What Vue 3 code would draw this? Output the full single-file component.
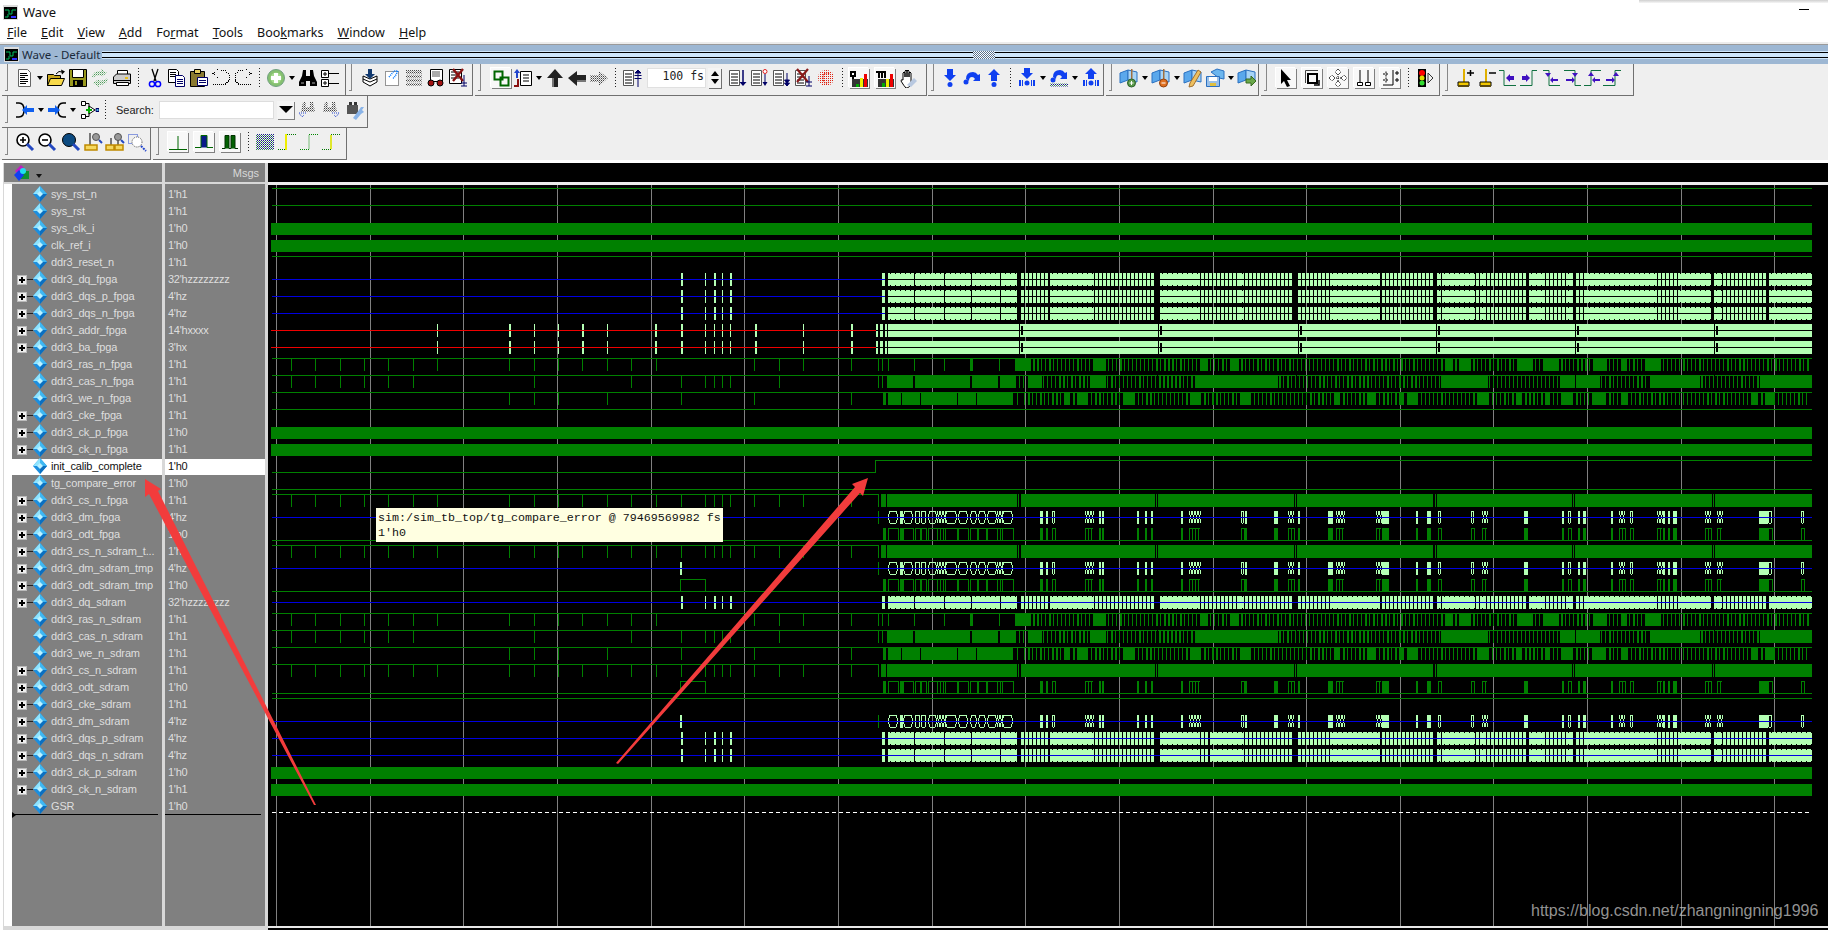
<template>
  <div class="app">
    <svg class="defs" width="0" height="0">
      <defs>
        <pattern id="dgreen" width="2" height="2" patternUnits="userSpaceOnUse"><rect width="1" height="1" fill="#4a9a5a" /><rect x="1" y="1" width="1" height="1" fill="#a8d0a8" /></pattern>
        <pattern id="dgray" width="2" height="2" patternUnits="userSpaceOnUse"><rect width="1" height="1" fill="#444" /><rect x="1" y="1" width="1" height="1" fill="#999" /></pattern>
        <pattern id="dblue" width="2" height="2" patternUnits="userSpaceOnUse"><rect width="1" height="1" fill="#1a1a8a" /><rect x="1" y="1" width="1" height="1" fill="#3a8a5a" /></pattern>
        <pattern id="dred" width="2" height="2" patternUnits="userSpaceOnUse"><rect width="1" height="1" fill="#e02010" /></pattern>
      </defs>
    </svg>

    <div class="titlebar">
      <svg class="appicon" viewBox="0 0 15 15" v-html="appIcon"></svg>
      <span class="title">Wave</span>
      <span class="minimize"></span>
    </div>
    <div class="menubar">
      <span v-for="m in menu" :key="m[0] + m[1]" class="menu-item">{{ m[0] }}<u>{{ m[1] }}</u>{{ m[2] }}</span>
    </div>

    <div class="subtitle">
      <svg class="subicon" viewBox="0 0 15 15" v-html="appIcon"></svg>
      <span class="subtitle-text">Wave - Default</span>
      <span class="stripes first"></span>
      <span class="grip-dots"></span>
      <span class="stripes"></span>
    </div>

    <div v-for="(row, r) in toolRows" :key="r" class="toolrow">
      <div v-for="(bar, b) in row" :key="b" class="toolbar" :style="{ width: bar.w + 'px', marginLeft: bar.m + 'px' }">
        <span class="grip"></span>
        <template v-for="(it, n) in bar.items" :key="n">
          <span v-if="it === '|'" class="sep"></span>
          <span v-else-if="it === 'v'" class="drop"></span>
          <span v-else-if="it[0] === '_'" :style="{ width: it.slice(1) + 'px' }"></span>
          <span v-else-if="it === 'search'" class="search">
            <span class="search-label">Search:</span>
            <span class="search-input"></span>
            <span class="search-drop"><i></i></span>
          </span>
          <span v-else-if="it === 'time'" class="time">
            <span class="time-input">100 fs</span>
            <span class="spin"><i class="up"></i><i class="down"></i></span>
          </span>
          <span v-else class="cell" :class="{ raised: raised.includes(it), narrow: narrow.includes(it) }">
            <svg viewBox="0 0 20 20" width="20" height="20" v-html="icons[it]"></svg>
          </span>
        </template>
      </div>
    </div>

    <div class="main">
      <div class="side">
        <div class="col names">
          <div class="col-head">
            <svg class="head-icon" viewBox="0 0 18 18">
              <path d="M2 7l6-6 5 5-6 6z" fill="#c020c0" />
              <path d="M8 7h8v8H8z" fill="#109030" />
              <path d="M1 11l5-5 5 5-5 6z" fill="#1040f0" />
              <circle cx="10" cy="7" r="3" fill="#20e0f0" />
            </svg>
            <span class="head-arrow"></span>
          </div>
          <div class="col-body">
            <div v-for="s in signals" :key="s.name" class="row" :class="{ sel: s.sel }">
              <span class="exp"><span v-if="s.tree" class="plus"></span></span>
              <span class="conn" :class="{ on: s.tree }"></span>
              <svg class="diamond" viewBox="0 0 14 16">
                <path d="M7 0l7 8-7 8-7-8z" fill="#1b8fe0" />
                <path d="M7 0v8H0z" fill="#8fe4ff" />
                <path d="M7 0l7 8H7z" fill="#3fb8f2" />
                <path d="M7 16V8h7z" fill="#0b6fc0" />
                <path d="M7 5l3 3-3 3-3-3z" fill="#bdf2ff" />
              </svg>
              <span class="name">{{ s.name }}</span>
            </div>
            <div class="foot"><i></i></div>
          </div>
        </div>
        <div class="col msgs">
          <div class="col-head right">Msgs</div>
          <div class="col-body">
            <div v-for="s in signals" :key="s.name" class="row val" :class="{ sel: s.sel }">{{ s.val }}</div>
            <div class="foot"></div>
          </div>
        </div>
      </div>
      <div class="wave-panel">
        <div class="wave-head"></div>
        <svg class="wave" width="1560" height="741" viewBox="268 185 1560 741" shape-rendering="crispEdges">
          <path :d="wave.grid" fill="#808080" />
          <path :d="wave.dark" fill="#008000" />
          <path :d="wave.light" fill="#b3ffb3" />
          <path :d="wave.outline" fill="none" stroke="#b3ffb3" />
          <path :d="wave.black" fill="#000" />
          <path :d="wave.blue" fill="#0000e0" />
          <path :d="wave.red" fill="#f00000" />
          <path d="M272 812.5H1812" fill="none" stroke="#fff" stroke-dasharray="4 3" />
        </svg>
        <div class="wave-end"></div>
        <div class="tip">sim:/sim_tb_top/tg_compare_error @ 79469569982 fs<br />1'h0</div>
        <div class="mark">https://blog.csdn.net/zhangningning1996</div>
      </div>
    </div>

    <svg class="arrows" width="1828" height="930" viewBox="0 0 1828 930">
      <path d="M145 479L161 489L158 491L316 805L314 805L149 494L145 497z" fill="#f23c3c" />
      <path d="M868 478L852 484L855 487L616 763L618 764L860 493L863 496z" fill="#f23c3c" />
    </svg>
    <div class="corner"></div>
  </div>
</template>

<script setup>
const appIcon = `<path d="M0 0h15v15H0z" fill="#ddd"/><path d="M1 2h13v12H1z" fill="#000"/><path d="M2 5h4v4h3V5h4M2 12h3V9" fill="none" stroke="#00c060"/><path d="M8 12h5" stroke="#3030ff" stroke-width="2"/>`

const menu = [
  ['', 'F', 'ile'], ['', 'E', 'dit'], ['', 'V', 'iew'], ['', 'A', 'dd'], ['Fo', 'r', 'mat'],
  ['', 'T', 'ools'], ['Boo', 'k', 'marks'], ['', 'W', 'indow'], ['', 'H', 'elp'],
]

const bkSheet = `<path d="M1 5l8-3v10l-8 3z" fill="#5aa8ec" stroke="#2a70c0"/><path d="M9 2l9 2v10l-9-2z" fill="#a8d4f6" stroke="#2a70c0"/>`

const icons = {
  doc: `<path d="M4.5 1.5h9l3 3v14h-12z" fill="#fff" stroke="#666"/><path d="M6 5.5h7M6 7.5h8M6 9.5h5M6 11.5h8M6 13.5h8M6 15.5h6" stroke="#000"/>`,
  open: `<path d="M1.5 17.5v-11h6l1 1h6v3" fill="#c8a820" stroke="#000"/><path d="M1.5 17.5l3-7h14l-3 7z" fill="#f7d94a" stroke="#000"/><path d="M10 6q3-4 6-2" fill="none" stroke="#000"/><path d="M15 1.5l4 2-3 3z" fill="#000"/>`,
  save: `<path d="M1.5 1.5h17v17h-17z" fill="#9a9a1e" stroke="#000"/><path d="M4.5 1.5h11v8h-11z" fill="#fff" stroke="#000"/><path d="M5 12h10v7H5z" fill="#000"/><path d="M7 13h2v4H7z" fill="#9a9a1e"/>`,
  refresh: `<path d="M2 10q0-7 9-7V1l6 4-6 4V7q-5 0-9 3zM18 10q0 7-9 7v2l-6-4 6-4v2q5 0 9-3z" fill="url(#dgreen)"/>`,
  print: `<path d="M5.5 2.5h10v6h-10z" fill="#fff" stroke="#000"/><path d="M1.5 9l3-3h14v9.5h-17z" fill="#ccc" stroke="#000"/><path d="M2 12.5h16" stroke="#000"/><path d="M4.5 14.5h12v3h-12z" fill="#fff" stroke="#000"/><path d="M13 9h3v2h-3z" fill="#e8c020"/>`,
  cut: `<path d="M7 1l4 12M13 1L9 13" stroke="#000" stroke-width="1.3"/><circle cx="7" cy="16" r="2.6" fill="none" stroke="#00f" stroke-width="1.5"/><circle cx="13" cy="16" r="2.6" fill="none" stroke="#00f" stroke-width="1.5"/>`,
  copy: `<path d="M1.5 1.5h8l2 2v11h-10z" fill="#fff" stroke="#000"/><path d="M3 4.5h6M3 6.5h6M3 8.5h6" stroke="#000"/><path d="M8.5 7.5h7l2 2v9h-9z" fill="#fff" stroke="#006"/><path d="M10 11.5h6M10 13.5h6M10 15.5h6" stroke="#006"/>`,
  paste: `<path d="M1.5 3.5h14v15h-14z" fill="#8a7a30" stroke="#000"/><path d="M5.5 1.5h6v4h-6z" fill="#e8d060" stroke="#000"/><path d="M8.5 9.5h10v8h-10z" fill="#fff" stroke="#006"/><path d="M10 12.5h7M10 14.5h7" stroke="#006"/>`,
  undo: `<path d="M10 2.5h4l4 4v6l-4 4H1" fill="none" stroke="#000" stroke-dasharray="1 1" shape-rendering="crispEdges"/><path d="M7 1.5L2 5.5l5 4" fill="none" stroke="#000" stroke-dasharray="1 1" shape-rendering="crispEdges"/>`,
  redo: `<path d="M10 2.5H6l-4 4v6l4 4h13" fill="none" stroke="#000" stroke-dasharray="1 1" shape-rendering="crispEdges"/><path d="M13 1.5l5 4-5 4" fill="none" stroke="#000" stroke-dasharray="1 1" shape-rendering="crispEdges"/>`,
  add: `<circle cx="10" cy="10" r="8.5" fill="#86c070" stroke="#70a080"/><circle cx="10" cy="10" r="5.5" fill="#a8dc90"/><path d="M8 5h4v3h3v4h-3v3H8v-3H5V8h3z" fill="#fff"/>`,
  bin: `<path d="M5 2h3v6h4V2h3l1 6 3 6v4h-7v-5H8v5H1v-4l3-6z" fill="#000"/><path d="M3 15h3M14 15h3" stroke="#aaa"/>`,
  expand: `<path d="M1.5 2.5h7v7h-7zM1.5 11.5h7v7h-7z" fill="#fff" stroke="#000"/><path d="M3 6h4M5 4v4M3 15h4M5 13v4M9 5.5h10M9 15.5h10" stroke="#000"/>`,
  sim1: `<path d="M3 8l7 3 7-3v6l-7 4-7-4z" fill="#fff" stroke="#000"/><path d="M3 11l7 3 7-3" fill="none" stroke="#000"/><path d="M8 1h4v5h3l-5 5-5-5h3z" fill="#123a70"/>`,
  sim2: `<path d="M3.5 3.5h13v14h-13z" fill="#fff" stroke="#333" stroke-dasharray="1 1"/><path d="M7 9l5-6h4l-4 7h-2" fill="none" stroke="#07f" stroke-dasharray="1 1" stroke-width="1.5"/>`,
  sim3: `<path d="M2 2h16v16H2z" fill="url(#dgray)"/><path d="M2 6.5h16M2 10.5h16M2 14.5h16" stroke="#ddd"/>`,
  sim4: `<path d="M4.5 1.5h12v12h-12z" fill="#fff" stroke="#000"/><path d="M6 4h8M6 6h8M6 8h8" stroke="#555"/><circle cx="5" cy="15" r="3" fill="#a01010" stroke="#000"/><circle cx="14" cy="15" r="3" fill="#a01010" stroke="#000"/>`,
  sim5: `<path d="M1.5 1.5h12v14h-12z" fill="#fff" stroke="#000"/><path d="M3 4h8M3 7h8M3 10h8" stroke="#000"/><path d="M5 1l10 12M15 1L5 13" stroke="#8a1010" stroke-width="2.4"/><path d="M16 7v11M13 15h6M13 18h6" stroke="#006"/>`,
  link: `<path d="M3.5 3.5h8v8h-8zM9.5 9.5h8v8h-8z" fill="none" stroke="#060" stroke-width="2"/>`,
  treeUp: `<path d="M7.5 3.5h11v14h-11z" fill="#fff" stroke="#000"/><path d="M10 7h6M10 10h6M10 13h6" stroke="#000"/><path d="M4 10V3" stroke="#24c" stroke-width="2"/><path d="M1 5l3-4 3 4z" fill="#24c"/><path d="M5 11v7H1" fill="none" stroke="#8a1010" stroke-width="2"/>`,
  up: `<path d="M10 1l8 9h-5v9H7v-9H2z" fill="#222"/><path d="M7 10v9h2v-9z" fill="#777"/>`,
  left: `<path d="M1 10l9-7v4h9v7h-9v4z" fill="#222"/><path d="M10 12h9v2h-9z" fill="#777"/>`,
  right: `<path d="M19 10l-9-7v4H1v7h9v4z" fill="url(#dgray)"/>`,
  find: `<path d="M1.5 2.5h10v15h-10z" fill="#fff" stroke="#555"/><path d="M3 6h7M3 9h7M3 12h7M3 15h7" stroke="#000"/><path d="M16 19V2M13 5l3-3 3 3zM12.5 7.5h7M12.5 10.5h7" stroke="#006" fill="#006"/>`,
  f1: `<path d="M1.5 2.5h10v15h-10z" fill="#fff" stroke="#555"/><path d="M3 6h7M3 9h7M3 12h7M3 15h7" stroke="#000"/><path d="M15 2v14" stroke="#006" stroke-width="1.5"/><path d="M11.5 14h7l-3.5 4z" fill="#006"/>`,
  f2: `<path d="M1.5 2.5h10v15h-10z" fill="#fff" stroke="#555"/><path d="M3 6h7M3 9h7M3 12h7M3 15h7" stroke="#000"/><circle cx="15" cy="3.5" r="2" fill="#fff" stroke="#e02020"/><path d="M15 6v9" stroke="#006"/><path d="M12.5 14h5l-2.5 4z" fill="#006"/>`,
  f3: `<path d="M1.5 2.5h10v15h-10z" fill="#fff" stroke="#555"/><path d="M3 6h7M3 9h7M3 12h7M3 15h7" stroke="#000"/><path d="M15 5v13M12.5 12h5l-2.5 3zM12.5 15h5l-2.5 3z" stroke="#006" fill="#006"/>`,
  f4: `<path d="M1.5 2.5h10v15h-10z" fill="#fff" stroke="#555"/><path d="M3 6h7M3 9h7M3 12h7M3 15h7" stroke="#000"/><path d="M3 1l11 13M14 1L3 14" stroke="#8a1a1a" stroke-width="2.2"/><path d="M15 8v10M12 14h6M12 18h6" stroke="#006"/>`,
  f5: `<circle cx="10" cy="10" r="8" fill="url(#dred)"/><path d="M13 6q-3-2-5 0t0 8q2 2 5 0" fill="none" stroke="#e02010" stroke-width="1.5" stroke-dasharray="1 1"/>`,
  perf: `<path d="M1 3h6v6H5v2H3V9H1z" fill="#000"/><path d="M3 5h2v2H3z" fill="#fff"/><path d="M3 19v-8h16v8z" fill="#333"/><path d="M7 16h3v3H7z" fill="#0a0"/><path d="M11 10h3v9h-3z" fill="#ee0"/><path d="M15 6h3v13h-3z" fill="#e00"/>`,
  mem: `<path d="M1 3h10v7H9V5H8v5H6V5H5v5H3V5H1z" fill="#000"/><path d="M3 19v-8h16v8z" fill="#333"/><path d="M7 15h3v4H7z" fill="#0a0"/><path d="M11 11h3v8h-3z" fill="#ee0"/><path d="M15 6h3v13h-3z" fill="#e00"/>`,
  hand: `<path d="M5 11V5q1-2 2 0v4-6q1-2 2 0v6-6q1-2 2 0v6-4q1-2 2 0v8q0 6-4 7H8q-2-2-5-7 0-2 2-1z" fill="#fff" stroke="#000"/><path d="M9 17l7-7 3 3-6 6z" fill="#b8c8e0"/>`,
  stepIn: `<path d="M7 1h6v6h3l-6 6-6-6h3z" fill="#1040f0"/><circle cx="10" cy="16.5" r="2.5" fill="#1040f0"/>`,
  stepOver: `<path d="M4 11Q4 4 11 4q3 0 5 3l2-1v7h-7l2-2q-1-2-3-2-3 0-3 4z" fill="#1040f0"/><circle cx="4" cy="14" r="2.5" fill="#1040f0"/>`,
  stepOut: `<path d="M10 1l6 6h-3v6H7V7H4z" fill="#1040f0"/><circle cx="10" cy="16.5" r="2.5" fill="#1040f0"/>`,
  stepInAll: `<path d="M7 0h6v5h3l-6 6-6-6h3z" fill="#1040f0"/><circle cx="10" cy="15" r="2.5" fill="#1040f0"/><path d="M2 12h2v6H2zM5 12h1v6H5zM14 12h1v6h-1zM16 12h2v6h-2z" fill="#1040f0"/>`,
  stepOverAll: `<path d="M4 9Q4 2 11 2q3 0 5 3l2-1v7h-7l2-2q-1-2-3-2-3 0-3 4z" fill="#1040f0"/><circle cx="4" cy="12" r="2.5" fill="#1040f0"/><path d="M1 15.5h18v3H1z" fill="url(#dblue)"/>`,
  stepOutAll: `<path d="M10 0l6 6h-3v5H7V6H4z" fill="#1040f0"/><circle cx="10" cy="15" r="2.5" fill="#1040f0"/><path d="M2 12h2v6H2zM5 12h1v6H5zM14 12h1v6h-1zM16 12h2v6h-2z" fill="#1040f0"/>`,
  bk1: `${bkSheet}<path d="M12 1h1.5v11H12z" fill="#a07040"/><circle cx="12.5" cy="15" r="4" fill="#5a9a4a" stroke="#2a602a"/><path d="M10.5 15h4M12.5 13v4" stroke="#fff"/>`,
  bk2: `${bkSheet}<path d="M12 1h1.5v11H12z" fill="#a07040"/><circle cx="12.5" cy="15" r="4" fill="#e07020" stroke="#904010"/><path d="M10.5 15h4" stroke="#fff"/>`,
  bk3: `${bkSheet}<path d="M15 2l3 2-8 14-4 1 1-4z" fill="#eec060" stroke="#a07030"/>`,
  bk4: `<path d="M6 4l6-3 7 2v8l-5-1z" fill="#6cb6ee" stroke="#2a70c0"/><path d="M1.5 8.5h13v10h-13z" fill="#9ac0e8" stroke="#2a70c0"/><path d="M4 9h8v4H4z" fill="#fff"/><path d="M5 15h6v3H5z" fill="#e0c040"/>`,
  bk5: `${bkSheet}<path d="M9 11h5V8l5 5-5 5v-3H9z" fill="#6aa84a" stroke="#386a20"/>`,
  ptr: `<path d="M5 1v15l3-3 3 6 3-1-3-6h4z" fill="#000"/>`,
  zoomCur: `<path d="M3.5 2.5H16M3.5 2.5V15" stroke="#444"/><path d="M6 6h9v9H6z" fill="none" stroke="#000" stroke-width="2"/><path d="M12 17h5v-5" fill="none" stroke="#000" stroke-width="1.5"/>`,
  pan: `<path d="M10 1l3 3-3 3-3-3zM10 13l3 3-3 3-3-3zM1 10l3-3 3 3-3 3zM13 10l3-3 3 3-3 3z" fill="#fff" stroke="#000" stroke-dasharray="1 1"/><path d="M10 6v8M6 10h8" stroke="#000" stroke-dasharray="1 1"/>`,
  dual: `<path d="M6 2v12M14 2v12" stroke="#000"/><path d="M3.5 14.5h5v3h-5zM11.5 14.5h5v3h-5z" fill="#fff" stroke="#000"/>`,
  cursorsSnap: `<path d="M13 2v15H3" fill="none" stroke="#000"/><path d="M3 6h6M3 12h6M6 3.5v5M6 9.5v5" stroke="#000" stroke-dasharray="2 1"/><path d="M15 5h4M17 3v4M15 12h4M17 10v4" stroke="#000"/>`,
  light: `<path d="M3 1h8v18H3z" fill="#000"/><circle cx="7" cy="5" r="3" fill="#f00"/><circle cx="7" cy="10" r="2.5" fill="#dd0"/><circle cx="7" cy="15" r="2.5" fill="#3d3"/><path d="M13 5l5 5-5 5z" fill="none" stroke="#333"/>`,
  curAdd: `<path d="M9 1v14" stroke="#e0b000" stroke-width="2"/><path d="M3 14h11v4H3z" fill="#f2c800" stroke="#000"/><path d="M12 5h7M15.5 2v6" stroke="#000" stroke-width="1.5"/><path d="M3 18h11" stroke="#5a4a10" stroke-width="2"/>`,
  curDel: `<path d="M9 1v14" stroke="#e0b000" stroke-width="2"/><path d="M3 14h11v4H3z" fill="#f2c800" stroke="#000"/><path d="M12 5h7" stroke="#000" stroke-width="1.5"/><path d="M3 18h11" stroke="#5a4a10" stroke-width="2"/>`,
  e1: `<path d="M1 2.5h5v15h12" fill="none" stroke="#107040"/><path d="M8 10l4-4v2h4v4h-4v2z" fill="#4010c0"/>`,
  e2: `<path d="M19 2.5h-5v15H2" fill="none" stroke="#107040"/><path d="M12 10L8 6v2H4v4h4v2z" fill="#4010c0"/>`,
  e3: `<path d="M1 2.5h6v15h11" fill="none" stroke="#107040"/><path d="M3 5h6l-3 4zM8 12l3-3v2h5v2h-5v2z" fill="#4010c0"/>`,
  e4: `<path d="M2 2.5h11v15h6" fill="none" stroke="#107040"/><path d="M10 5h6l-3 4zM13 12l-3-3v2H4v2h6v2z" fill="#4010c0"/>`,
  e5: `<path d="M2 17.5h7v-15h10" fill="none" stroke="#107040"/><path d="M6 8h6L9 4zM10 12l3-3v2h5v2h-5v2z" fill="#4010c0"/>`,
  e6: `<path d="M1 17.5h12v-15h6" fill="none" stroke="#107040"/><path d="M11 8h6l-3-4zM13 12l-3-3v2H4v2h6v2z" fill="#4010c0"/>`,
  mergeL: `<path d="M1 3h3q5 0 5 7t-5 7H1" stroke="#000" fill="none" stroke-width="1.6"/><path d="M19 8v4h-7v3l-5-5 5-5v3z" fill="#1060f0"/>`,
  mergeR: `<path d="M19 3h-3q-5 0-5 7t5 7h3" stroke="#000" fill="none" stroke-width="1.6"/><path d="M1 8v4h7v3l5-5-5-5v3z" fill="#1060f0"/>`,
  treeAdd: `<path d="M2.5 1.5h4v4h-4zM2.5 14.5h4v4h-4z" fill="#fff" stroke="#000"/><path d="M6 3.5h4v13H6" fill="none" stroke="#000"/><path d="M10 6l6 4-6 4z" fill="#fff" stroke="#000"/><path d="M7 10h6M10 7v6" stroke="#0a0" stroke-width="2"/><path d="M17 8.5h3v3h-3z" fill="#4ad" stroke="#006"/>`,
  findPrev: `<path d="M5 2h3v5h4V2h3l2 10H3z" fill="url(#dgray)"/><path d="M8 13H1l3 4 2-2" fill="none" stroke="#24c" stroke-dasharray="1 1"/>`,
  findNext: `<path d="M5 2h3v5h4V2h3l2 10H3z" fill="url(#dgray)"/><path d="M12 13h7l-3 4-2-2" fill="none" stroke="#24c" stroke-dasharray="1 1"/>`,
  wrench: `<path d="M2 5h11v9H2z" fill="#555"/><path d="M4 2h3v3H4zM9 2h3v3H9z" fill="#333"/><path d="M8 18l6-8 2-3h3l-2 3 2 2-3 2-5 6z" fill="#8ab4e8"/>`,
  zoomIn: `<circle cx="8" cy="8" r="6" fill="#fff" stroke="#000" stroke-width="1.6"/><path d="M5 8h6M8 5v6" stroke="#000" stroke-width="1.6"/><path d="M12 12l6 6" stroke="#2448c0" stroke-width="3"/>`,
  zoomOut: `<circle cx="8" cy="8" r="6" fill="#fff" stroke="#000" stroke-width="1.6"/><path d="M5 8h6" stroke="#000" stroke-width="1.6"/><path d="M12 12l6 6" stroke="#2448c0" stroke-width="3"/>`,
  zoomFull: `<circle cx="8" cy="8" r="6.5" fill="#0c4a80" stroke="#000"/><path d="M12 12l6 6" stroke="#2448c0" stroke-width="3"/>`,
  zoomC1: `<path d="M7 1v13" stroke="#000"/><path d="M2 13h12v5H2z" fill="#f5d860" stroke="#c08a00" stroke-width="1.5"/><circle cx="13" cy="5" r="3.5" fill="#999" stroke="#555"/><path d="M16 8l3 3" stroke="#2448c0" stroke-width="2"/>`,
  zoomC2: `<path d="M6 6v8M13 1v13" stroke="#000"/><path d="M1 13h8v5H1zM10 13h8v5h-8z" fill="#f5d860" stroke="#c08a00" stroke-width="1.5"/><circle cx="13" cy="5" r="3.5" fill="#999" stroke="#555"/><path d="M16 8l3 3" stroke="#2448c0" stroke-width="2"/>`,
  zoomD: `<path d="M1.5 2.5h9v9h-9z" fill="none" stroke="#24c" stroke-dasharray="1 1"/><circle cx="10" cy="10" r="5" fill="#fff" stroke="#555" stroke-dasharray="1 1"/><path d="M14 14l5 5" stroke="#24c" stroke-dasharray="2 1" stroke-width="2"/>`,
  w1: `<path d="M1 17.5h18M10 4v13" fill="none" stroke="#060"/>`,
  w2: `<path d="M1 15.5h6v-12h6v12h6" fill="#0a1a8a" stroke="#060"/>`,
  w3: `<path d="M2 16.5h3v-13h4v13h2v-13h4v13h3" fill="#006000" stroke="#003000"/>`,
  d1: `<path d="M1 2h18v16H1z" fill="url(#dblue)"/>`,
  d2: `<path d="M1 17.5h8v-15h10" fill="none" stroke="#070" stroke-dasharray="1 1"/><path d="M8 2h2v16H8z" fill="#ee0"/>`,
  d3: `<path d="M1 17.5h9v-15h9" fill="none" stroke="#080" stroke-dasharray="1 1"/>`,
  d4: `<path d="M1 17.5h9v-15h9" fill="none" stroke="#070" stroke-dasharray="1 1"/><path d="M10 3v14" stroke="#ee0" stroke-width="1.5"/>`,
}

const raised = ['link', 'perf', 'mem', 'ptr', 'zoomCur', 'pan', 'dual', 'cursorsSnap', 'w1', 'w2', 'w3']
const narrow = ['e1', 'e2', 'e3', 'e4', 'e5', 'e6']

const toolRows = [
  [
    { w: 344, m: 0, items: ['doc', 'v', 'open', 'save', 'refresh', 'print', '|', 'cut', 'copy', 'paste', 'undo', 'redo', '|', 'add', 'v', 'bin', 'expand'] },
    { w: 127, m: 0, items: ['_2', 'sim1', 'sim2', 'sim3', 'sim4', 'sim5'] },
    { w: 452, m: 2, items: ['_4', 'link', 'treeUp', 'v', 'up', 'left', 'right', '|', 'find', 'time', '_6', 'f1', 'f2', 'f3', 'f4', 'f5', '|', '_1', 'perf', '_4', 'mem', '_1', 'hand'] },
    { w: 176, m: 1, items: ['stepIn', 'stepOver', 'stepOut', '|', 'stepInAll', 'v', 'stepOverAll', 'v', 'stepOutAll'] },
    { w: 153, m: 2, items: ['_1', 'bk1', 'v', 'bk2', 'v', 'bk3', '_1', 'bk4', 'v', 'bk5'] },
    { w: 179, m: 2, items: ['_3', 'ptr', '_4', 'zoomCur', '_4', 'pan', '_4', 'dual', '_4', 'cursorsSnap', '_2', '|', 'light'] },
    { w: 192, m: 2, items: ['_1', 'curAdd', 'curDel', 'e1', 'e2', '_4', 'e3', 'e4', 'e5', 'e6'] },
  ],
  [
    { w: 366, m: 0, items: ['_1', 'mergeL', 'v', 'mergeR', 'v', 'treeAdd', '|', 'search', 'findPrev', 'findNext', '_3', 'wrench'] },
  ],
  [
    { w: 149, m: 0, items: ['_1', 'zoomIn', 'zoomOut', '_2', 'zoomFull', 'zoomC1', 'zoomC2', 'zoomD'] },
    { w: 194, m: 2, items: ['_3', 'w1', '_4', 'w2', '_4', 'w3', '_2', '|', 'd1', 'd2', 'd3', 'd4'] },
  ],
]

const sig = (name, val, tree = false, sel = false) => ({ name, val, tree, sel })
const signals = [
  sig('sys_rst_n', "1'h1"), sig('sys_rst', "1'h1"), sig('sys_clk_i', "1'h0"), sig('clk_ref_i', "1'h0"),
  sig('ddr3_reset_n', "1'h1"), sig('ddr3_dq_fpga', "32'hzzzzzzzz", true), sig('ddr3_dqs_p_fpga', "4'hz", true),
  sig('ddr3_dqs_n_fpga', "4'hz", true), sig('ddr3_addr_fpga', "14'hxxxx", true), sig('ddr3_ba_fpga', "3'hx", true),
  sig('ddr3_ras_n_fpga', "1'h1"), sig('ddr3_cas_n_fpga', "1'h1"), sig('ddr3_we_n_fpga', "1'h1"),
  sig('ddr3_cke_fpga', "1'h1", true), sig('ddr3_ck_p_fpga', "1'h0", true), sig('ddr3_ck_n_fpga', "1'h1", true),
  sig('init_calib_complete', "1'h0", false, true), sig('tg_compare_error', "1'h0"),
  sig('ddr3_cs_n_fpga', "1'h1", true), sig('ddr3_dm_fpga', "4'hz", true), sig('ddr3_odt_fpga', "1'h0", true),
  sig('ddr3_cs_n_sdram_t...', "1'h1", true), sig('ddr3_dm_sdram_tmp', "4'hz", true), sig('ddr3_odt_sdram_tmp', "1'h0", true),
  sig('ddr3_dq_sdram', "32'hzzzzzzzz", true), sig('ddr3_ras_n_sdram', "1'h1"), sig('ddr3_cas_n_sdram', "1'h1"),
  sig('ddr3_we_n_sdram', "1'h1"), sig('ddr3_cs_n_sdram', "1'h1", true), sig('ddr3_odt_sdram', "1'h0", true),
  sig('ddr3_cke_sdram', "1'h1", true), sig('ddr3_dm_sdram', "4'hz", true), sig('ddr3_dqs_p_sdram', "4'hz", true),
  sig('ddr3_dqs_n_sdram', "4'hz", true), sig('ddr3_ck_p_sdram', "1'h0", true), sig('ddr3_ck_n_sdram', "1'h1", true),
  sig('GSR', "1'h0"),
]

// waveform data: everything is drawn as one filled path per colour
const XE = 1812
const yc = i => 194 + 17 * i
const R = (x0, x1, y0, y1) => `M${x0} ${y0}H${x1}V${y1}H${x0}z`

function buildWave() {
  let dark = '', light = '', outline = '', black = '', blue = '', red = '', grid = ''
  let seed = 7
  const rnd = () => {
    seed = (seed * 16807) % 2147483647
    return seed / 2147483647
  }

  for (let k = 0; k <= 16; k++) {
    const x = Math.round(276 + 93.65 * k)
    grid += R(x, x + 1, 185, 926)
  }

  const hi = (i, a = 272, b = XE) => { dark += R(a, b, yc(i) - 6, yc(i) - 5) }
  const lo = (i, a = 272, b = XE) => { dark += R(a, b, yc(i) + 6, yc(i) + 7) }
  const tick = (i, x, w = 1) => { dark += R(x, x + w, yc(i) - 6, yc(i) + 7) }
  const clock = i => { dark += R(271, XE, yc(i) - 5, yc(i) + 7) }

  const T_RAS = [291, 315, 340, 364, 388, 413, 437, 509, 534, 558, 582, 607, 631, 656, 754, 779, 803, 851]
  const T_CAS = [291, 315, 340, 364, 388, 413, 534, 631, 681, 705, 714, 722, 730, 779]
  const T_WE = [509, 534, 558, 607, 681, 754, 851]
  const T_CS = [291, 315, 340, 364, 388, 413, 437, 509, 534, 558, 582, 607, 631, 656, 681, 705, 714, 722, 730, 754, 779, 803, 851]
  const T_DQ = [[681, 2], [705, 1], [714, 2], [722, 1], [730, 2]]
  const T_ADDR = [[437, 1], [509, 2], [534, 1], [558, 1], [582, 2], [607, 1], [655, 2], [681, 2], [705, 1], [714, 1], [722, 1], [730, 1], [755, 2], [803, 1], [851, 2]]

  const ras = i => {
    hi(i)
    T_RAS.forEach(x => tick(i, x))
    ;[878, 882, 888, 914, 944, 999].forEach(x => tick(i, x))
    tick(i, 970, 3)
    let x = 1015
    while (x < XE - 3) {
      const r = rnd()
      if (r < 0.07) {
        const w = Math.round(5 + rnd() * 12)
        tick(i, x, Math.min(w, XE - x))
        x += w + 2
      } else {
        tick(i, x, r < 0.35 ? 2 : 1)
        x += 4
      }
    }
  }

  const CAS_Z = [[887, 913], [915, 970], [972, 998], [1000, 1015], [1028, 1042], [1090, 1106], [1197, 1278], [1441, 1488], [1560, 1600], [1650, 1700], [1760, XE]]
  const cas = i => {
    hi(i)
    T_CAS.forEach(x => tick(i, x))
    ;[878, 882].forEach(x => tick(i, x))
    CAS_Z.forEach(([a, b]) => tick(i, a, b - a))
    let prev = 1015
    CAS_Z.slice(4).concat([[XE, XE]]).forEach(([a, b]) => {
      for (let x = prev; x < a - 1; x += 4) tick(i, x, rnd() < 0.3 ? 2 : 1)
      prev = b + 1
    })
    ;[1157, 1296, 1575, 1714].forEach(x => { black += R(x, x + 1, yc(i) - 6, yc(i) + 7) })
  }

  const WE_Z = [[883, 886], [888, 901], [902, 920], [921, 957], [958, 976], [977, 1013]]
  const we = i => {
    hi(i)
    T_WE.forEach(x => tick(i, x))
    WE_Z.forEach(([a, b]) => tick(i, a, b - a))
    tick(i, 1017, 1)
    let x = 1024
    while (x < XE - 3) {
      const r = rnd()
      if (r < 0.1) {
        const w = Math.round(5 + rnd() * 9)
        tick(i, x, Math.min(w, XE - x))
        x += w + 3
      } else {
        tick(i, x, r < 0.4 ? 2 : 1)
        x += 4
      }
    }
  }

  const cs = i => {
    hi(i, 272, 878)
    T_CS.forEach(x => tick(i, x))
    tick(i, 878)
    ;[[881, 886], [887, 1017], [1021, 1155], [1158, 1294], [1297, 1433], [1437, 1572], [1575, 1712], [1715, XE]].forEach(([a, b]) => tick(i, a, b - a))
    ;[1018, 1156, 1295, 1435, 1573, 1713].forEach(x => tick(i, x))
  }

  // burst groups of the dm / odt rows: b = bar, h = crossed hex pairs, x = single hex
  const HEXES = [[888, 898], [903, 913], [915, 920], [921, 926], [928, 937], [945, 957], [958, 968], [970, 977], [978, 986], [987, 997], [1002, 1013]]
  const SEGS = [
    [900, 903, 'b'], [937, 945, 'h'], [997, 1002, 'h'],
    [1040, 1043, 'b'], [1046, 1048, 'b'], [1052, 1055, 'x'], [1085, 1093, 'h'], [1099, 1101, 'b'], [1102, 1104, 'b'],
    [1137, 1139, 'b'], [1145, 1147, 'b'], [1151, 1153, 'b'], [1181, 1183, 'b'], [1189, 1200, 'h'], [1241, 1244, 'x'], [1245, 1247, 'b'],
    [1274, 1278, 'b'], [1288, 1295, 'h'], [1298, 1300, 'b'], [1328, 1333, 'b'], [1336, 1344, 'h'], [1376, 1381, 'h'], [1382, 1389, 'b'],
    [1416, 1418, 'b'], [1427, 1431, 'b'], [1438, 1441, 'x'], [1471, 1474, 'x'], [1482, 1487, 'h'], [1524, 1528, 'b'],
    [1562, 1564, 'b'], [1568, 1571, 'x'], [1578, 1580, 'b'], [1583, 1586, 'b'], [1611, 1613, 'b'], [1619, 1625, 'h'], [1630, 1633, 'x'],
    [1657, 1662, 'h'], [1663, 1665, 'b'], [1668, 1670, 'b'], [1673, 1677, 'b'], [1705, 1711, 'h'], [1717, 1722, 'h'],
    [1759, 1768, 'b'], [1768, 1772, 'x'], [1801, 1804, 'x'],
  ]
  const hex = (i, a, b) => {
    const y = yc(i)
    const d = b - a > 6 ? 2 : 1
    outline += `M${a} ${y}L${a + d} ${y - 6}H${b - d}L${b} ${y}L${b - d} ${y + 6}H${a + d}z`
  }
  const dm = i => {
    tick(i, 878)
    HEXES.forEach(([a, b]) => hex(i, a, b))
    SEGS.forEach(([a, b, t]) => {
      if (t === 'b') light += R(a, b, yc(i) - 6, yc(i) + 7)
      else if (t === 'x') hex(i, a, b)
      else {
        const y = yc(i)
        for (let x = a; x < b - 1; x += 3) outline += `M${x} ${y - 6}L${x + 3} ${y + 6}M${x + 3} ${y - 6}L${x} ${y + 6}`
      }
    })
    blue += R(272, XE, yc(i), yc(i) + 1)
  }
  const odt = (i, pulse) => {
    lo(i)
    if (pulse) {
      hi(i, 680, 705)
      tick(i, 680)
      tick(i, 705)
    }
    tick(i, 883, 3)
    HEXES.forEach(([a, b]) => {
      hi(i, a, b)
      tick(i, a)
      tick(i, b)
    })
    SEGS.forEach(([a, b, t]) => {
      if (t === 'b') tick(i, a, b - a)
      else if (t === 'x') {
        hi(i, a, b)
        tick(i, a)
        tick(i, b)
      } else {
        hi(i, a, b)
        for (let x = a; x <= b; x += 3) tick(i, x)
      }
    })
  }

  const Z = [[888, 1017, 's'], [1021, 1049, 'c'], [1050, 1094, 's'], [1095, 1155, 'c'], [1160, 1200, 's'], [1201, 1240, 'c'], [1240, 1244, 's'], [1245, 1294, 'c'],
    [1298, 1330, 'c'], [1330, 1380, 's'], [1382, 1433, 'c'], [1437, 1441, 's'], [1442, 1475, 's'], [1476, 1480, 'c'], [1480, 1486, 's'], [1487, 1527, 'c'],
    [1529, 1545, 's'], [1546, 1565, 'c'], [1566, 1573, 's'], [1576, 1587, 'c'], [1587, 1657, 's'], [1658, 1677, 'c'], [1678, 1711, 's'], [1714, 1722, 's'], [1723, 1768, 'c'], [1769, XE, 's']]
  const Z2 = Z.map(z => (z[0] === 1201 ? [1201, 1209, 'c'] : z)).concat([[1210, 1240, 's']])

  const dq = (i, ticks, zones, sdram) => {
    const y = yc(i)
    blue += R(272, 885, y, y + 1)
    ticks.forEach(([x, w]) => { light += R(x, x + w, y - 6, y + 7) })
    light += R(882, 885, y - 6, y + 7)
    zones.forEach(([a, b, t]) => {
      if (t === 's') {
        light += R(a, b, y - 6, y + 7)
        for (let x = a + 2; x < b; x += 5) black += R(x, x + 1, y - 6, y - 5) + R(x, x + 1, y + 6, y + 7)
      } else {
        for (let x = a; x < b - 1; x += 4) light += R(x, x + 3, y - 6, y + 7)
      }
    })
    ;[914, 944, 971, 1000].forEach(x => { black += R(x, x + 1, y - 6, y + 7) })
    black += R(888, XE, y, y + 1)
    if (sdram) blue += R(885, XE, y, y + 1)
  }

  const addr = i => {
    const y = yc(i)
    red += R(271, 876, y, y + 1)
    T_ADDR.forEach(([x, w]) => { light += R(x, x + w, y - 6, y + 7) })
    ;[[876, 878], [880, 883], [885, 887], [888, XE]].forEach(([a, b]) => { light += R(a, b, y - 6, y + 7) })
    black += R(876, XE, y, y + 1)
    ;[1019, 1158, 1298, 1436, 1575, 1714].forEach(x => {
      black += R(x, x + 1, y - 6, y + 7) + R(x + 2, x + 4, y - 4, y + 5)
    })
  }

  hi(0); hi(1); clock(2); clock(3); hi(4)
  dq(5, T_DQ, Z); dq(6, T_DQ, Z); dq(7, T_DQ, Z)
  addr(8); addr(9)
  ras(10); cas(11); we(12)
  hi(13); clock(14); clock(15)
  lo(16, 272, 875); dark += R(875, 876, yc(16) - 6, yc(16) + 7); hi(16, 875, XE)
  lo(17)
  cs(18); dm(19); odt(20, false)
  cs(21); dm(22); light += R(680, 682, yc(22) - 6, yc(22) + 7); odt(23, true)
  dq(24, T_DQ, Z, true)
  seed = 7
  ras(25); cas(26); we(27)
  cs(28); odt(29, true); hi(30)
  dm(31); light += R(680, 682, yc(31) - 6, yc(31) + 7)
  dq(32, T_DQ, Z2, true); dq(33, T_DQ, Z2, true)
  clock(34); clock(35)

  return { grid, dark, light, outline, black, blue, red }
}

const wave = buildWave()
</script>

<style scoped>
.app {
  position: relative;
  display: flex;
  flex-direction: column;
  width: 1828px;
  height: 930px;
  overflow: hidden;
  background: #fff;
  font-family: "Liberation Sans", Arial, sans-serif;
}
.defs { position: absolute; width: 0; height: 0; }

.titlebar { display: flex; align-items: center; height: 21px; padding: 3px 0 0 3px; box-sizing: border-box; }
.appicon { width: 15px; height: 15px; margin-right: 5px; }
.title { font: 13px "Noto Sans", sans-serif; color: #111; }
.minimize { width: 10px; height: 1px; background: #000; margin-left: auto; margin-right: 19px; margin-top: -5px; }

.menubar { display: flex; align-items: center; height: 20px; padding: 2px 0 0 7px; box-sizing: border-box; gap: 14px; font: 12.5px "Noto Sans", sans-serif; color: #111; }
.menu-item u { text-decoration: underline; }

.subtitle {
  display: flex;
  align-items: center;
  height: 19px;
  margin-top: 4px;
  padding-left: 4px;
  background: #9db7d3;
  box-shadow: 0 -1px 0 #9a9a9a, 0 -3px 0 #ececec;
}
.subicon { width: 15px; height: 15px; margin-right: 3px; }
.subtitle-text { width: 80px; font: 11.5px "Noto Sans", sans-serif; color: #1a2a3a; white-space: nowrap; }
.stripes { flex: 1; height: 8px; background: linear-gradient(#cfe6fa 0 1px, #000 1px 2px, #cfe6fa 2px 6px, #000 6px 7px, #cfe6fa 7px 8px); }
.stripes.first { flex: none; width: 871px; }
.grip-dots { width: 22px; height: 8px; background: repeating-conic-gradient(#fff 0 25%, #56708e 0 50%) 0 0 / 2px 2px; }

.toolrow { display: flex; height: 32px; padding-left: 2px; background: #efefef; box-sizing: border-box; }
.toolbar {
  display: flex;
  align-items: center;
  flex: none;
  height: 32px;
  padding-bottom: 4px;
  box-sizing: border-box;
  border-right: 1px solid #707070;
  border-bottom: 1px solid #707070;
}
.grip { flex: none; width: 3px; height: 27px; margin: 0 5px 0 3px; border-right: 1px solid #888; border-bottom: 1px solid #888; box-sizing: border-box; }
.cell { flex: none; display: flex; align-items: center; justify-content: center; width: 22px; height: 24px; }
.cell.narrow { width: 20px; }
.cell.raised svg { background: #f8f8f8; box-shadow: 1px 1px 0 #808080, -1px -1px 0 #fff; }
.sep { flex: none; width: 10px; height: 20px; background: repeating-linear-gradient(#222 0 1px, transparent 1px 3px) center / 1px 100% no-repeat; }
.sep + .cell { margin-left: 1px; }
.drop { flex: none; width: 10px; height: 4px; position: relative; }
.drop::after { content: ""; position: absolute; left: 2px; top: 0; border: 3px solid transparent; border-top: 4px solid #000; border-bottom: 0; }

.search { display: flex; align-items: center; margin-left: 6px; margin-right: 3px; }
.search-label { width: 43px; font-size: 11px; color: #222; }
.search-input { width: 115px; height: 18px; background: #fff; border: 1px solid #ddd; box-sizing: border-box; }
.search-drop { display: flex; align-items: center; justify-content: center; width: 17px; height: 18px; margin-left: 3px; background: #f4f4f4; box-shadow: 1px 1px 0 #808080; }
.search-drop i { border: 7px solid transparent; border-top: 7px solid #000; border-bottom: 0; }

.time { display: flex; align-items: center; margin-left: 4px; }
.time-input {
  width: 59px;
  height: 20px;
  line-height: 20px;
  padding-right: 1px;
  box-sizing: border-box;
  text-align: right;
  font: 11.5px "DejaVu Sans Mono", monospace;
  white-space: pre;
  background: #fff;
  border: 1px solid #e0e0e0;
  color: #222;
}
.spin { display: flex; flex-direction: column; align-items: center; gap: 3px; justify-content: center; width: 13px; height: 20px; margin-left: 2px; background: #f4f4f4; box-shadow: 1px 1px 0 #707070; }
.spin .up { border: 4px solid transparent; border-bottom: 5px solid #000; border-top: 0; }
.spin .down { border: 4px solid transparent; border-top: 5px solid #000; border-bottom: 0; }

.main { display: flex; flex: 1; margin-top: 3px; min-height: 0; }
.side { display: flex; flex: none; width: 268px; padding-left: 4px; box-sizing: border-box; box-shadow: inset 3px 0 0 #fff; background: #d8d8d8; }
.col { display: flex; flex-direction: column; }
.names { width: 158px; margin-right: 3px; }
.msgs { width: 100px; }
.col-head { position: relative; flex: none; height: 19px; margin-bottom: 2px; background: #808080; color: #d8d8d8; font-size: 11px; line-height: 21px; }
.col-head.right { text-align: right; padding-right: 6px; }
.head-icon { position: absolute; left: 9px; top: 1px; width: 18px; height: 18px; }
.head-arrow { position: absolute; left: 32px; top: 11px; border: 3px solid transparent; border-top: 4px solid #111; border-bottom: 0; }
.col-body { flex: none; height: 742px; padding-top: 3px; box-sizing: border-box; background: #808080; display: flex; flex-direction: column; }
.names .col-body { border-left: 8px solid #fff; }
.row { display: flex; align-items: center; flex: none; height: 17px; padding-bottom: 3px; box-sizing: border-box; color: #dedede; font-size: 11px; letter-spacing: -0.15px; background: #808080; white-space: nowrap; }
.row.sel { background: #fff; color: #111; height: 16px; padding-bottom: 2px; margin-bottom: 1px; }
.row.val { padding-left: 3px; letter-spacing: -0.25px; }
.exp { flex: none; width: 15px; padding-left: 5px; box-sizing: border-box; }
.plus { display: block; width: 10px; height: 10px; margin-top: 1px; background: linear-gradient(#000, #000) center / 6px 2px no-repeat, linear-gradient(#000, #000) center / 2px 6px no-repeat, #eee; box-shadow: inset 0 0 0 1px #bbb; }
.conn { flex: none; width: 6px; height: 1px; margin-top: 1px; }
.conn.on { background: #222; }
.diamond { flex: none; width: 14px; height: 16px; margin-right: 4px; }
.foot { position: relative; flex: 1; border-top: 1px solid #000; margin: -2px 4px 0 0; }
.foot i { position: absolute; left: 0; top: -3px; border: 3px solid transparent; border-left: 4px solid #000; border-right: 0; }

.wave-panel { position: relative; flex: 1; background: #000; }
.wave-head { height: 19px; background: #000; border-bottom: 3px solid #ececec; }
.wave { display: block; background: #000; position: relative; }
.wave-end { height: 2px; background: #e8e8e8; }
.tip {
  position: absolute;
  left: 108px;
  top: 345px;
  width: 347px;
  height: 34px;
  padding: 3px 0 0 2px;
  box-sizing: border-box;
  background: #ffffe1;
  color: #111;
  font: 11.67px/15px "Liberation Mono", monospace;
  white-space: nowrap;
}
.mark {
  position: absolute;
  left: 1263px;
  top: 739px;
  color: rgba(205, 205, 205, 0.72);
  font-size: 16px;
  white-space: nowrap;
}
.arrows { position: absolute; left: 0; top: 0; pointer-events: none; }
.corner { position: absolute; right: 0; top: 0; width: 189px; height: 3px; background: linear-gradient(#cfcfcf, #f6f6f6); }
</style>
